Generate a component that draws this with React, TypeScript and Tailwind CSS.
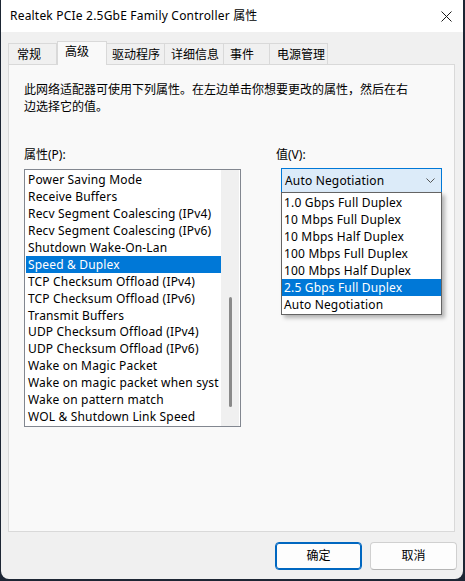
import React from 'react';

const properties = [
  'Power Saving Mode',
  'Receive Buffers',
  'Recv Segment Coalescing (IPv4)',
  'Recv Segment Coalescing (IPv6)',
  'Shutdown Wake-On-Lan',
  'Speed & Duplex',
  'TCP Checksum Offload (IPv4)',
  'TCP Checksum Offload (IPv6)',
  'Transmit Buffers',
  'UDP Checksum Offload (IPv4)',
  'UDP Checksum Offload (IPv6)',
  'Wake on Magic Packet',
  'Wake on magic packet when syst',
  'Wake on pattern match',
  'WOL & Shutdown Link Speed',
];

const values = [
  '1.0 Gbps Full Duplex',
  '10 Mbps Full Duplex',
  '10 Mbps Half Duplex',
  '100 Mbps Full Duplex',
  '100 Mbps Half Duplex',
  '2.5 Gbps Full Duplex',
  'Auto Negotiation',
];

// label, width, left padding of the text
const tabs: [string, string, string][] = [
  ['常规', 'w-[49px]', 'pl-[8px]'],
  ['高级', 'w-[50px]', 'pl-[7px]'],
  ['驱动程序', 'w-[59px]', 'pl-[5px]'],
  ['详细信息', 'w-[60px]', 'pl-[6px]'],
  ['事件', 'w-[47px]', 'pl-[6px]'],
  ['电源管理', 'w-[59px]', 'pl-[7px]'],
];

const App = () => {
  const selectedProp = 'Speed & Duplex';
  const selectedValue = '2.5 Gbps Full Duplex';

  return (
    <div
      className="w-[465px] h-[581px] bg-[#1d2634] overflow-hidden text-[12px] text-black"
      style={{ fontFamily: '"Noto Sans", "Noto Sans CJK SC", sans-serif' }}
    >
      <div className="ml-[1px] w-[462px] h-[579px] bg-[#f0f0f0] rounded-b-[8px] flex flex-col overflow-hidden">
        {/* Title bar */}
        <div className="h-[32px] bg-white flex items-center justify-between pl-[9px] pr-[10px] shrink-0">
          <span className="text-[12px] leading-none">
            <span className="tracking-[0.2px]">Realtek PCIe 2.5GbE Family Controller </span>属性
          </span>
          <svg width="11" height="11" viewBox="0 0 11 11" className="mr-[1px]">
            <path d="M0.5 0.5 L10.5 10.5 M10.5 0.5 L0.5 10.5" stroke="#1a1a1a" strokeWidth="1" />
          </svg>
        </div>

        <div className="pl-[7px] pr-[8px] flex flex-col">
          {/* Tabs */}
          <div className="mt-[9px] h-[23px] flex items-end">
            {tabs.map(([label, w, pl]) =>
              label === '高级' ? (
                <div
                  key={label}
                  className={`${w} ${pl} h-[24px] -mb-px relative z-10 bg-[#f9f9f9] border border-b-0 border-[#d9d9d9] flex items-start pt-[1px] leading-[17px]`}
                >
                  {label}
                </div>
              ) : (
                <div
                  key={label}
                  className={`${w} ${pl} h-[21px] bg-[#f0f0f0] border border-b-0 border-[#d9d9d9] -ml-px first:ml-0 flex items-center pt-[1px]`}
                >
                  {label}
                </div>
              )
            )}
          </div>

          {/* Panel */}
          <div className="h-[468px] bg-[#f9f9f9] border border-[#d9d9d9] pl-[15px] pt-[16px] flex flex-col">
            <p className="leading-[17px]">
              此网络适配器可使用下列属性。在左边单击你想要更改的属性，然后在右
              <br />
              边选择它的值。
            </p>

            <div className="mt-[31px] flex gap-[35px]">
              {/* Properties */}
              <div className="w-[217px] flex flex-col">
                <div className="leading-[17px]">属性(P):</div>
                <div className="mt-[6px] h-[258px] border border-[#828790] bg-white p-px flex">
                  <div className="flex-1 min-w-0 flex flex-col">
                    {properties.map((p) => (
                      <div
                        key={p}
                        className={`h-[17px] leading-[17px] pl-[2px] tracking-[0.17px] whitespace-nowrap overflow-hidden ${
                          p === selectedProp ? 'bg-[#0078d7] text-white' : ''
                        }`}
                      >
                        {p}
                      </div>
                    ))}
                  </div>
                  <div className="w-[18px] bg-[#f0f0f0] flex justify-center pt-[127px] -mt-px -mb-px">
                    <div className="w-[3px] h-[110px] rounded-full bg-[#8a8a8a] ml-[1px]" />
                  </div>
                </div>
              </div>

              {/* Value */}
              <div className="flex flex-col">
                <div className="leading-[17px]">值(V):</div>
                <div className="relative ml-[5px] mt-[5px] w-[161px]">
                  <div className="h-[25px] border border-[#0078d7] bg-[#dcebf9] flex items-center justify-between pl-[3px] pr-[6px]">
                    <span className="tracking-[0.17px]">Auto Negotiation</span>
                    <svg width="9" height="5" viewBox="0 0 9 5">
                      <path d="M0.5 0.5 L4.5 4.5 L8.5 0.5" fill="none" stroke="#555" strokeWidth="1" />
                    </svg>
                  </div>
                  <div className="absolute left-0 top-[24px] w-[161px] border border-[#646464] bg-white py-px shadow-[3px_3px_4px_rgba(0,0,0,0.28)] z-20">
                    {values.map((v) => (
                      <div
                        key={v}
                        className={`h-[17px] leading-[17px] pl-[2px] tracking-[0.17px] ${
                          v === selectedValue ? 'bg-[#0078d7] text-white' : ''
                        }`}
                      >
                        {v}
                      </div>
                    ))}
                  </div>
                </div>
              </div>
            </div>
          </div>

          {/* Buttons */}
          <div className="mt-[10px] flex justify-end gap-[8px] -mr-[2px]">
            <button className="w-[87px] h-[28px] rounded-[4px] border border-[#0067c0] bg-[#fdfdfd] shadow-[inset_0_0_0_1px_#0067c0]">
              确定
            </button>
            <button className="w-[87px] h-[28px] rounded-[4px] border border-[#d0d0d0] border-b-[#b5b5b5] bg-[#fdfdfd]">
              取消
            </button>
          </div>
        </div>
      </div>
    </div>
  );
};

export default App;
